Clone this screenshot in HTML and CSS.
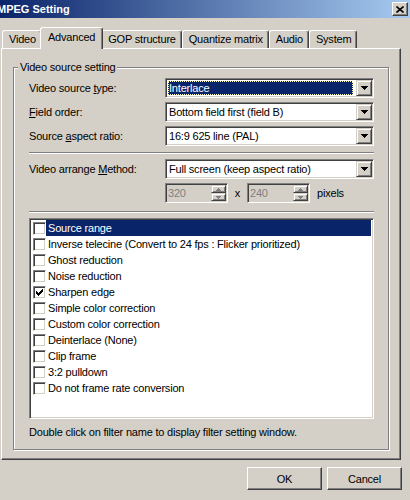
FILE: index.html
```html
<!DOCTYPE html>
<html lang="en">
<head>
    <meta charset="UTF-8">
    <title>MPEG Setting</title>
    <link rel="stylesheet" href="styles.css">
</head>
<body>

<div class="titlebar">
    <span class="title">MPEG Setting</span>
    <span class="close">
        <svg width="8" height="7" viewBox="0 0 8 7"><path d="M0.5 0.5L7.5 6.5M7.5 0.5L0.5 6.5" stroke="#000" stroke-width="1.6"/></svg>
    </span>
</div>

<div class="tabs">
    <div class="tab">Video</div>
    <div class="tab active">Advanced</div>
    <div class="tab">GOP structure</div>
    <div class="tab">Quantize matrix</div>
    <div class="tab">Audio</div>
    <div class="tab">System</div>
</div>

<div class="panel">
    <div class="group">
        <div class="group-title">Video source setting</div>

        <div class="field">
            <label>Video source <u>t</u>ype:</label>
            <div class="combo focused">
                <span class="value">Interlace</span>
                <span class="arrow"><svg width="7" height="4" viewBox="0 0 7 4"><path d="M0 0h7v1H0zM1 1h5v1H1zM2 2h3v1H2zM3 3h1v1H3z"/></svg></span>
            </div>
        </div>
        <div class="field">
            <label><u>F</u>ield order:</label>
            <div class="combo">
                <span class="value">Bottom field first (field B)</span>
                <span class="arrow"><svg width="7" height="4" viewBox="0 0 7 4"><path d="M0 0h7v1H0zM1 1h5v1H1zM2 2h3v1H2zM3 3h1v1H3z"/></svg></span>
            </div>
        </div>
        <div class="field">
            <label>Source <u>a</u>spect ratio:</label>
            <div class="combo">
                <span class="value">16:9 625 line (PAL)</span>
                <span class="arrow"><svg width="7" height="4" viewBox="0 0 7 4"><path d="M0 0h7v1H0zM1 1h5v1H1zM2 2h3v1H2zM3 3h1v1H3z"/></svg></span>
            </div>
        </div>

        <div class="sep"></div>

        <div class="field">
            <label>Video arrange <u>M</u>ethod:</label>
            <div class="combo">
                <span class="value">Full screen (keep aspect ratio)</span>
                <span class="arrow"><svg width="7" height="4" viewBox="0 0 7 4"><path d="M0 0h7v1H0zM1 1h5v1H1zM2 2h3v1H2zM3 3h1v1H3z"/></svg></span>
            </div>
        </div>
        <div class="size-row">
            <div class="spin">
                <span class="spin-value">320</span>
                <span class="spin-buttons">
                    <span class="spin-btn"><svg width="5" height="3" viewBox="0 0 5 3"><path d="M2 0h1v1H2zM1 1h3v1H1zM0 2h5v1H0z"/></svg></span>
                    <span class="spin-btn"><svg width="5" height="3" viewBox="0 0 5 3"><path d="M0 0h5v1H0zM1 1h3v1H1zM2 2h1v1H2z"/></svg></span>
                </span>
            </div>
            <span class="times">x</span>
            <div class="spin">
                <span class="spin-value">240</span>
                <span class="spin-buttons">
                    <span class="spin-btn"><svg width="5" height="3" viewBox="0 0 5 3"><path d="M2 0h1v1H2zM1 1h3v1H1zM0 2h5v1H0z"/></svg></span>
                    <span class="spin-btn"><svg width="5" height="3" viewBox="0 0 5 3"><path d="M0 0h5v1H0zM1 1h3v1H1zM2 2h1v1H2z"/></svg></span>
                </span>
            </div>
            <span class="unit">pixels</span>
        </div>

        <div class="sep"></div>

        <div class="list">
            <div class="item selected"><span class="check"></span><span class="name">Source range</span></div>
            <div class="item"><span class="check"></span><span class="name">Inverse telecine (Convert to 24 fps : Flicker prioritized)</span></div>
            <div class="item"><span class="check"></span><span class="name">Ghost reduction</span></div>
            <div class="item"><span class="check"></span><span class="name">Noise reduction</span></div>
            <div class="item"><span class="check"><svg width="7" height="7" viewBox="0 0 7 7"><path d="M0 2h1v3H0zM1 3h1v3H1zM2 4h1v3H2zM3 3h1v3H3zM4 2h1v3H4zM5 1h1v3H5zM6 0h1v3H6z"/></svg></span><span class="name">Sharpen edge</span></div>
            <div class="item"><span class="check"></span><span class="name">Simple color correction</span></div>
            <div class="item"><span class="check"></span><span class="name">Custom color correction</span></div>
            <div class="item"><span class="check"></span><span class="name">Deinterlace (None)</span></div>
            <div class="item"><span class="check"></span><span class="name">Clip frame</span></div>
            <div class="item"><span class="check"></span><span class="name">3:2 pulldown</span></div>
            <div class="item"><span class="check"></span><span class="name">Do not frame rate conversion</span></div>
        </div>

        <p class="hint">Double click on filter name to display filter setting window.</p>
    </div>
</div>

<div class="buttons">
    <button>OK</button>
    <button>Cancel</button>
</div>

</body>
</html>
```

FILE: styles.css
```css
* {
    margin: 0;
    padding: 0;
    box-sizing: border-box;
}

body {
    width: 410px;
    height: 500px;
    overflow: hidden;
    background-color: #d4d0c8;
    color: #000;
    font-family: 'Liberation Sans', Arial, sans-serif;
    font-size: 11px;
    line-height: 13px;
    letter-spacing: -0.2px;
}

/* Title bar */
.titlebar {
    height: 18px;
    display: flex;
    align-items: center;
    justify-content: space-between;
    background: linear-gradient(to right, #0a246a, #a6caf0);
    color: #fff;
    font-weight: bold;
    letter-spacing: 0;
}

.title {
    margin-left: -3px;
}

.close {
    width: 16px;
    height: 14px;
    margin-right: 2px;
    display: flex;
    align-items: center;
    justify-content: center;
    background-color: #d4d0c8;
    border: 1px solid;
    border-color: #fff #404040 #404040 #fff;
    box-shadow: inset -1px -1px #808080;
}

/* Tabs */
.tabs {
    display: flex;
    align-items: flex-end;
    margin-top: 9px;
    padding-left: 2px;
}

.tab {
    height: 18px;
    padding: 0 5px 0 6px;
    line-height: 17px;
    border: 1px solid;
    border-bottom: none;
    border-color: #fff #404040 #fff #fff;
    border-radius: 3px 3px 0 0;
    box-shadow: inset -1px 0 #808080;
    background-color: #d4d0c8;
}

.tab.active {
    position: relative;
    z-index: 1;
    height: 22px;
    margin: 0 -2px -1px;
    padding: 0 7px;
    line-height: 18px;
}

.panel {
    width: 400px;
    height: 412px;
    margin-left: 1px;
    padding: 18px 11px 0;
    border: 1px solid;
    border-color: #fff #404040 #404040 #fff;
    box-shadow: inset -1px -1px #808080;
}

/* Group box */
.group {
    width: 376px;
    height: 383px;
    padding: 0 14px 0 15px;
    border: 1px solid #808080;
    box-shadow: inset 1px 1px #fff, 1px 1px #fff;
}

.group-title {
    display: table;
    margin: -7px 0 0 -11px;
    padding: 0 2px;
    background-color: #d4d0c8;
}

.field {
    display: flex;
    align-items: center;
    height: 20px;
    margin-top: 4px;
}

.field label {
    width: 136px;
}

.combo {
    flex: 1;
    height: 20px;
    display: flex;
    padding: 1px;
    background-color: #fff;
    border: 1px solid;
    border-color: #808080 #fff #fff #808080;
    box-shadow: inset 1px 1px #404040, inset -1px -1px #d4d0c8;
}

.combo .value {
    flex: 1;
    padding: 1px 2px 0;
    line-height: 15px;
    white-space: nowrap;
    overflow: hidden;
}

.combo.focused .value {
    margin: 1px 3px 1px 1px;
    padding: 0 1px;
    line-height: 14px;
    background-color: #0a246a;
    color: #fff;
    outline: 1px dotted #ffffc0;
    outline-offset: -1px;
}

.arrow {
    width: 16px;
    height: 16px;
    display: flex;
    align-items: center;
    justify-content: center;
    background-color: #d4d0c8;
    border: 1px solid;
    border-color: #d4d0c8 #404040 #404040 #d4d0c8;
    box-shadow: inset 1px 1px #fff, inset -1px -1px #808080;
}

.sep {
    height: 2px;
    margin-top: 6px;
    border-top: 1px solid #808080;
    border-bottom: 1px solid #fff;
}

.sep + .field {
    margin-top: 5px;
}

/* Disabled size boxes */
.size-row {
    display: flex;
    align-items: center;
    height: 20px;
    margin: 4px 0 0 136px;
}

.spin {
    width: 63px;
    height: 20px;
    display: flex;
    padding: 1px;
    border: 1px solid;
    border-color: #808080 #fff #fff #808080;
    box-shadow: inset 1px 1px #404040, inset -1px -1px #d4d0c8;
}

.spin-value {
    flex: 1;
    padding: 1px 1px 0;
    line-height: 15px;
    color: #808080;
}

.spin-buttons {
    width: 15px;
    display: flex;
    flex-direction: column;
}

.spin-btn {
    flex: 1;
    display: flex;
    align-items: center;
    justify-content: center;
    border: 1px solid;
    border-color: #d4d0c8 #404040 #404040 #d4d0c8;
    box-shadow: inset 1px 1px #fff, inset -1px -1px #808080;
    fill: #808080;
}

.times {
    width: 19px;
    text-align: center;
}

.unit {
    margin-left: 7px;
}

.size-row + .sep {
    margin-top: 8px;
}

/* Filter list */
.list {
    height: 201px;
    margin-top: 5px;
    padding: 1px 2px 0;
    background-color: #fff;
    border: 1px solid;
    border-color: #808080 #fff #fff #808080;
    box-shadow: inset 1px 1px #404040, inset -1px -1px #d4d0c8;
}

.item {
    display: flex;
    align-items: center;
    height: 16px;
}

.check {
    width: 13px;
    height: 13px;
    margin-left: 1px;
    display: flex;
    align-items: center;
    justify-content: center;
    background-color: #fff;
    border: 1px solid;
    border-color: #808080 #fff #fff #808080;
    box-shadow: inset 1px 1px #404040, inset -1px -1px #d4d0c8;
}

.name {
    flex: 1;
    height: 16px;
    padding-left: 2px;
    line-height: 16px;
    white-space: nowrap;
    overflow: hidden;
}

.item.selected .name {
    background-color: #0a246a;
    color: #fff;
}

.hint {
    margin-top: 7px;
}

/* Dialog buttons */
.buttons {
    display: flex;
    justify-content: flex-end;
    gap: 5px;
    margin-top: 7px;
    padding-right: 8px;
}

button {
    width: 75px;
    height: 23px;
    font-family: inherit;
    font-size: 11px;
    letter-spacing: inherit;
    color: #000;
    background-color: #d4d0c8;
    border: 1px solid;
    border-color: #fff #404040 #404040 #fff;
    box-shadow: inset -1px -1px #808080;
}
```
